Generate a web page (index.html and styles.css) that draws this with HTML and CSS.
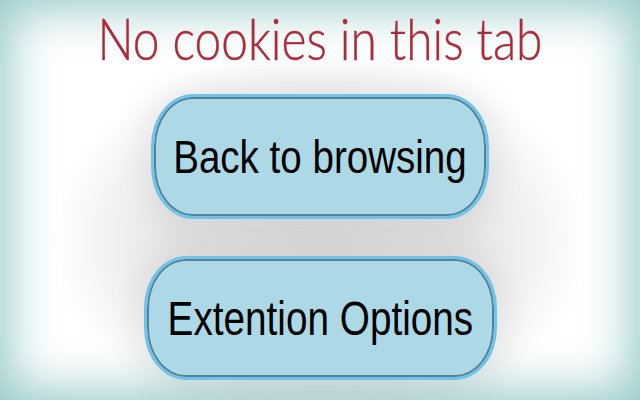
FILE: index.html
```html
<!DOCTYPE html>
<html>
<head>
<meta charset="utf-8">
<link rel="stylesheet" href="styles.css">
</head>
<body>
<main class="page">
  <h1 class="title"><span class="squeeze">No cookies in this tab</span></h1>
  <button class="btn btn-back"><span class="squeeze">Back to browsing</span></button>
  <button class="btn btn-options"><span class="squeeze">Extention Options</span></button>
</main>
</body>
</html>
```
FILE: styles.css
```css
html, body {
  margin: 0;
  padding: 0;
  width: 640px;
  height: 400px;
  overflow: hidden;
}
body {
  background: #ffffff;
}
.page {
  width: 640px;
  height: 400px;
  box-sizing: border-box;
  display: flex;
  flex-direction: column;
  align-items: center;
  background: radial-gradient(ellipse 42% 48% at 50% 60%, #dcdcdc 0%, #e3e3e3 50%, #f3f3f3 80%, #ffffff 100%);
  box-shadow: inset 0 0 50px 8px #93c7c7;
}
.title {
  margin: 6px 0 0 0;
  font-family: Lato, "Open Sans", sans-serif;
  font-weight: 300;
  font-size: 57px;
  line-height: 65px;
  color: #ad2a3a;
  -webkit-text-stroke: 0.4px #ad2a3a;
  white-space: nowrap;
}
.squeeze {
  display: inline-block;
  transform: scaleX(0.82);
}
.title .squeeze {
  transform: scaleX(0.84);
}
.btn {
  font-family: "Liberation Sans", Arial, sans-serif;
  font-size: 47px;
  color: #000;
  background: #add8e6;
  border: 3px solid #72c2e8;
  box-shadow: inset 0 0 0 2px #52839a, 0 0 30px 14px rgba(0, 0, 0, 0.05);
  border-radius: 42px / 52px;
  padding: 0;
  display: flex;
  align-items: center;
  justify-content: center;
  white-space: nowrap;
}
.btn-back {
  width: 338px;
  height: 125px;
  margin-top: 23px;
}
.btn-options {
  width: 353px;
  height: 124px;
  margin-top: 37px;
  font-size: 49px;
}
.btn-options .squeeze {
  transform: scaleX(0.79);
}
```
